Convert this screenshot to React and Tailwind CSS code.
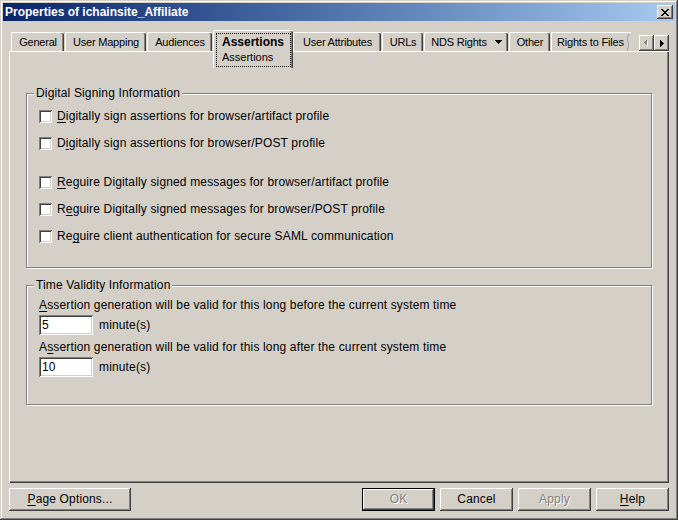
const FONT = "font-['Liberation_Sans',Arial,sans-serif]";
const RAISED =
  "shadow-[inset_-1px_-1px_0_#404040,inset_1px_1px_0_#ffffff,inset_-2px_-2px_0_#808080,inset_2px_2px_0_#d4d0c8]";
const SUNKEN =
  "shadow-[inset_1px_1px_0_#808080,inset_-1px_-1px_0_#ffffff,inset_2px_2px_0_#404040,inset_-2px_-2px_0_#d4d0c8]";
const TAB =
  "mt-[2px] h-[19px] mr-[1px] flex items-center justify-center text-[11px] tracking-[-0.2px] whitespace-nowrap border-l border-t border-white rounded-t-[2px] shadow-[inset_-1px_0_0_#404040,inset_-2px_0_0_#808080]";

const CLOSE_ROWS = [
  [0, 1, 6, 7],
  [1, 2, 5, 6],
  [2, 3, 4, 5],
  [3, 4],
  [2, 3, 4, 5],
  [1, 2, 5, 6],
  [0, 1, 6, 7],
];

function CloseGlyph() {
  return (
    <svg width="8" height="7" viewBox="0 0 8 7" shapeRendering="crispEdges">
      {CLOSE_ROWS.map((row, y) =>
        row.map((x) => <rect key={`${x}-${y}`} x={x} y={y} width="1" height="1" fill="#000" />)
      )}
    </svg>
  );
}

function Check() {
  return <span className={`block w-[13px] h-[13px] bg-white shrink-0 ${SUNKEN}`} />;
}

function CheckRow({ children, className = "" }) {
  return (
    <div className={`flex items-center h-[15px] ${className}`}>
      <Check />
      <span className="ml-[5px] leading-[15px] whitespace-nowrap">{children}</span>
    </div>
  );
}

function U({ children }) {
  return <span className="underline underline-offset-[2px]">{children}</span>;
}

function Field({ value }) {
  return (
    <div className={`w-[54px] h-[20px] bg-white flex items-center pl-[3px] leading-[15px] ${SUNKEN}`}>
      {value}
    </div>
  );
}

function Btn({ children, w = "w-[73px]", disabled = false, def = false }) {
  return (
    <div
      className={`${w} h-[23px] flex items-center justify-center bg-[#d4d0c8] leading-[15px] ${RAISED} ${
        def ? "border border-black" : ""
      } ${disabled ? "text-[#808080] [text-shadow:1px_1px_0_#ffffff]" : "text-black"}`}
    >
      {children}
    </div>
  );
}

export default function App() {
  return (
    <div
      className={`w-[678px] h-[520px] bg-[#d4d0c8] p-[3px] ${FONT} text-[12px] tracking-[0.15px] text-black flex flex-col shadow-[inset_-1px_-1px_0_#404040,inset_1px_1px_0_#d4d0c8,inset_-2px_-2px_0_#808080,inset_2px_2px_0_#ffffff]`}
    >
      {/* Title bar */}
      <div className="h-[18px] flex items-center justify-between bg-linear-to-r from-[#0a246a] to-[#a6caf0] pl-[2px] pr-[2px]">
        <span className="text-white font-bold text-[12px] tracking-normal leading-[18px] whitespace-nowrap">
          Properties of ichainsite_Affiliate
        </span>
        <div className={`w-[16px] h-[14px] bg-[#d4d0c8] flex items-center justify-center ${RAISED}`}>
          <CloseGlyph />
        </div>
      </div>

      {/* Tab row */}
      <div className="mt-[9px] ml-[6px] w-[660px] h-[21px] flex items-start pl-[2px]">
        <div className={`${TAB} w-[53px]`}>General</div>
        <div className={`${TAB} w-[81px]`}>User Mapping</div>
        <div className={`${TAB} w-[65px]`}>Audiences</div>
        <div className="relative z-10 w-[80px] h-[38px] bg-[#d4d0c8] border-l border-t border-white rounded-t-[2px] shadow-[inset_-1px_0_0_#404040,inset_-2px_0_0_#808080] pt-[2px] pl-[2px]">
          <div className="w-[75px] h-[34px] border border-dotted border-black pl-[5px] pt-[1px] flex flex-col items-start tracking-normal">
            <span className="font-bold text-[12px] leading-[15px]">Assertions</span>
            <span className="text-[11px] leading-[15px]">Assertions</span>
          </div>
        </div>
        <div className={`${TAB} w-[88px]`}>User Attributes</div>
        <div className={`${TAB} w-[41px]`}>URLs</div>
        <div className={`${TAB} w-[84px] gap-[8px]`}>
          <span>NDS Rights</span>
          <svg width="7" height="4" viewBox="0 0 7 4" shapeRendering="crispEdges">
            <path d="M0 0H7L3.5 4Z" fill="#000" />
          </svg>
        </div>
        <div className={`${TAB} w-[41px]`}>Other</div>
        <div className="relative mt-[2px] h-[19px] w-[80px] flex items-center pl-[5px] text-[11px] tracking-[-0.2px] whitespace-nowrap overflow-hidden border-l border-t border-white rounded-tl-[2px]">
          <span>Rights to Files</span>
          <svg className="absolute right-0 top-0" width="6" height="19" viewBox="0 0 6 19">
            <path d="M4 1 Q1 5 3 9 Q5 13 2 18" stroke="#a0a0a0" strokeWidth="1" fill="none" />
          </svg>
        </div>
        <div className="ml-auto mt-[5px] flex">
          <div className={`w-[15px] h-[16px] bg-[#d4d0c8] flex items-center justify-center ${RAISED}`}>
            <svg width="5" height="8" viewBox="0 0 5 8" shapeRendering="crispEdges">
              <path d="M4 1V8L1 4.5Z" fill="#ffffff" />
              <path d="M3 0V7L0 3.5Z" fill="#808080" />
            </svg>
          </div>
          <div className={`w-[15px] h-[16px] bg-[#d4d0c8] flex items-center justify-center ${RAISED}`}>
            <svg width="4" height="7" viewBox="0 0 4 7" shapeRendering="crispEdges">
              <path d="M0 0V7L4 3.5Z" fill="#000" />
            </svg>
          </div>
        </div>
      </div>

      {/* Panel */}
      <div className="ml-[6px] w-[660px] h-[432px] border-l border-t border-white shadow-[inset_-1px_-1px_0_#404040,inset_-2px_-2px_0_#808080] pt-[41px] pl-[16px]">
        {/* Group 1 */}
        <div className="relative w-[626px] h-[175px] border border-[#808080] shadow-[1px_1px_0_#ffffff,inset_1px_1px_0_#ffffff] pl-[12px] pt-[15px]">
          <span className="absolute left-[7px] top-[-8px] px-[2px] bg-[#d4d0c8] leading-[15px] whitespace-nowrap">
            Digital Signing Information
          </span>
          <CheckRow>
            <U>D</U>igitally sign assertions for browser/artifact profile
          </CheckRow>
          <CheckRow className="mt-[12px]">
            D<U>i</U>gitally sign assertions for browser/POST profile
          </CheckRow>
          <CheckRow className="mt-[24px]">
            <U>R</U>eguire Digitally signed messages for browser/artifact profile
          </CheckRow>
          <CheckRow className="mt-[12px]">
            R<U>e</U>guire Digitally signed messages for browser/POST profile
          </CheckRow>
          <CheckRow className="mt-[12px]">
            Re<U>g</U>uire client authentication for secure SAML communication
          </CheckRow>
        </div>

        {/* Group 2 */}
        <div className="relative mt-[17px] w-[626px] h-[120px] border border-[#808080] shadow-[1px_1px_0_#ffffff,inset_1px_1px_0_#ffffff] pl-[12px] pt-[12px]">
          <span className="absolute left-[7px] top-[-8px] px-[2px] bg-[#d4d0c8] leading-[15px] whitespace-nowrap">
            Time Validity Information
          </span>
          <div className="leading-[15px] whitespace-nowrap">
            <U>A</U>ssertion generation will be valid for this long before the current system time
          </div>
          <div className="mt-[2px] flex items-center">
            <Field value="5" />
            <span className="ml-[6px] leading-[15px]">minute(s)</span>
          </div>
          <div className="mt-[5px] leading-[15px] whitespace-nowrap">
            A<U>s</U>sertion generation will be valid for this long after the current system time
          </div>
          <div className="mt-[2px] flex items-center">
            <Field value="10" />
            <span className="ml-[6px] leading-[15px]">minute(s)</span>
          </div>
        </div>
      </div>

      {/* Buttons */}
      <div className="mt-[5px] ml-[6px] w-[660px] flex">
        <Btn w="w-[122px]">
          <span>
            <U>P</U>age Options...
          </span>
        </Btn>
        <div className="ml-auto flex gap-[5px]">
          <Btn def disabled>
            OK
          </Btn>
          <Btn>Cancel</Btn>
          <Btn disabled>Apply</Btn>
          <Btn>
            <span>
              <U>H</U>elp
            </span>
          </Btn>
        </div>
      </div>
    </div>
  );
}
